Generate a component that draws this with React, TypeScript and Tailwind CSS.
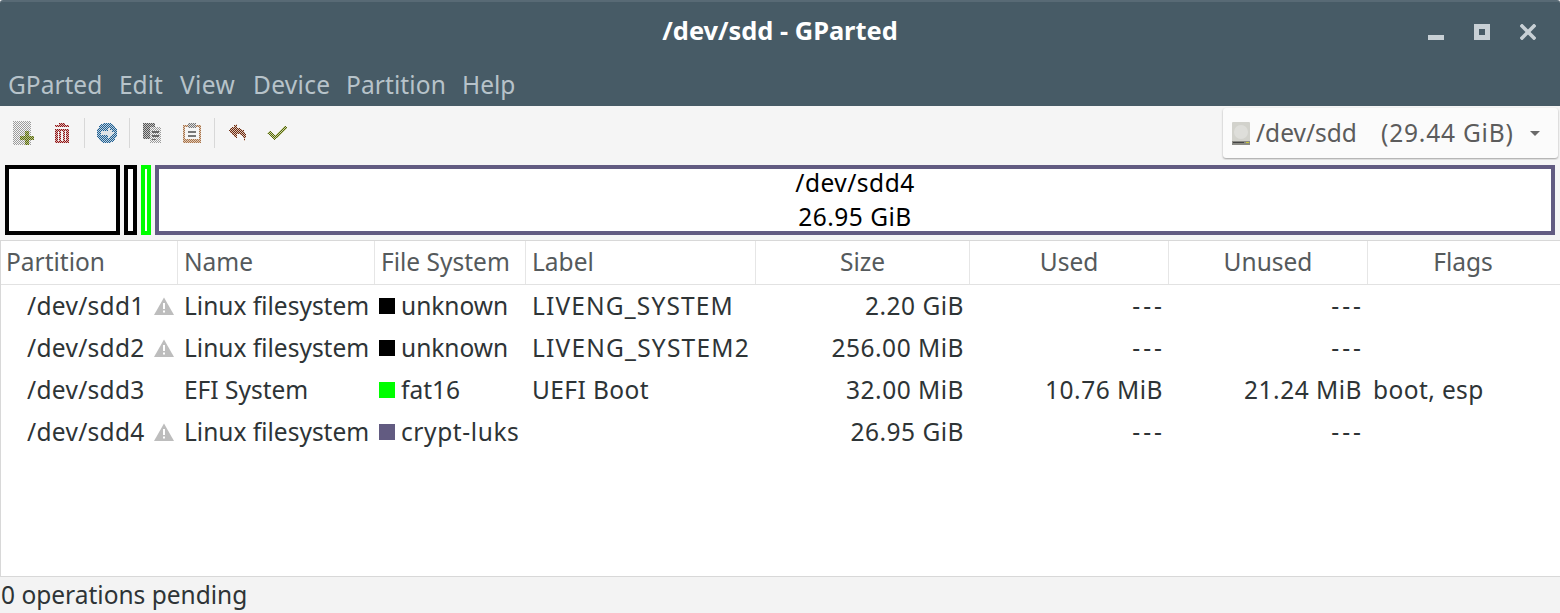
import { ReactNode } from "react";

// flip swaps the dark and pale cells, the phase differs from icon to icon in the reference.
function Checker({ id, color, pale = "#f5f5f5", flip = false }: { id: string; color: string; pale?: string; flip?: boolean }) {
  return (
    <pattern id={id} width="2" height="2" patternUnits="userSpaceOnUse">
      <rect width="2" height="2" fill={pale} />
      <rect x={flip ? 1 : 0} width="1" height="1" fill={color} />
      <rect x={flip ? 0 : 1} y="1" width="1" height="1" fill={color} />
    </pattern>
  );
}

function Icon({ w, h, className, children }: { w: number; h: number; className?: string; children: ReactNode }) {
  return (
    <svg width={w} height={h} viewBox={`0 0 ${w} ${h}`} shapeRendering="crispEdges" className={`shrink-0 ${className ?? ""}`}>
      {children}
    </svg>
  );
}

function ToolbarSep({ className }: { className: string }) {
  return <div className={`h-[30px] w-px shrink-0 bg-[#d8d8d8] ${className}`} />;
}

function DriveCombo() {
  return (
    <div className="ml-auto mr-[2px] flex h-[50px] w-[335px] items-center rounded-[3px] bg-[#fbfbfb] pl-[9px] text-[#5c5c5c] shadow-[0_1px_2px_rgba(0,0,0,0.35)]">
      <svg width="18" height="23" viewBox="0 0 18 23" className="shrink-0">
        <rect width="18" height="23" rx="1" fill="#d2d2cc" />
        <circle cx="9" cy="10" r="7" fill="#dededa" />
        <rect y="19" width="18" height="4" fill="#8a8a84" />
        <rect x="1" y="20" width="11" height="1" fill="#444" />
        <rect x="14" y="20" width="3" height="1" fill="#c8c832" />
      </svg>
      <span className="ml-[6px] w-[125px]">/dev/sdd</span>
      <span className="tracking-[0.8px]">(29.44 GiB)</span>
      <svg width="10" height="5" viewBox="0 0 10 5" className="ml-[16px] mt-[1px]">
        <path d="M0 0h10L5 5z" fill="#6a6a6a" />
      </svg>
    </div>
  );
}

function Toolbar() {
  return (
    <div className="flex h-[54px] items-center bg-[#f5f5f5] pl-[13px]">
      <Icon w={21} h={24}>
        <defs>
          <Checker id="p-doc" color="#9c9c9c" />
          <Checker id="p-green" color="#5a6b10" pale="#b9c08a" />
        </defs>
        <rect width="18" height="24" fill="url(#p-doc)" />
        <path d="M12 10h4v5h5v4h-5v5h-4v-5H7v-4h5z" fill="url(#p-green)" />
      </Icon>
      <Icon w={14} h={20} className="ml-[21px]">
        <defs>
          <Checker id="p-red" color="#8f1515" pale="#dcb4b4" />
        </defs>
        <path d="M4 0h6v2h4v2H0V2h4z" fill="url(#p-red)" />
        <path d="M0 6h14v14H0zM3 8v10h1V8zM6 8v10h2V8zM10 8v10h1V8z" fillRule="evenodd" fill="url(#p-red)" />
      </Icon>
      <ToolbarSep className="ml-[15px]" />
      <Icon w={20} h={20} className="ml-[12px]">
        <defs>
          <Checker id="p-blue" color="#1d5f94" pale="#c2d2de" flip />
        </defs>
        <path d="M6 0h8v1h2v1h1v1h1v2h1v1h1v8h-1v1h-1v2h-1v1h-1v1h-2v1H6v-1H4v-1H3v-1H2v-2H1v-1H0V6h1V5h1V3h1V2h1V1h2z" fill="url(#p-blue)" />
        <path d="M4 8h7V5h2v2h2v2h2v2h-2v2h-2v2h-2v-3H4z" fill="#dfe3e6" />
      </Icon>
      <ToolbarSep className="ml-[12px]" />
      <Icon w={18} h={20} className="ml-[13px]">
        <defs>
          <Checker id="p-gray" color="#555555" pale="#c4c4c4" />
          <Checker id="p-lgray" color="#9c9c9c" />
        </defs>
        <rect width="12" height="16" fill="url(#p-gray)" />
        <rect x="7" y="4" width="11" height="16" fill="url(#p-lgray)" />
        <path d="M9 8h7v2H9zM9 12h7v2H9zM9 16h4v1H9z" fill="#666666" />
      </Icon>
      <Icon w={18} h={20} className="ml-[22px]">
        <defs>
          <Checker id="p-brown" color="#a8734a" pale="#e0cbb8" />
          <Checker id="p-clip" color="#777777" pale="#dddddd" />
        </defs>
        <path d="M0 2h18v18H0zM2 4v12h14V4z" fillRule="evenodd" fill="url(#p-brown)" />
        <rect x="5" width="8" height="5" fill="url(#p-clip)" />
        <path d="M5 8h8v2H5zM5 12h8v2H5z" fill="#777777" />
      </Icon>
      <ToolbarSep className="ml-[13px]" />
      <Icon w={17} h={18} className="ml-[14px]">
        <defs>
          <Checker id="p-undo" color="#6b2a10" pale="#dcc4b6" />
        </defs>
        <path d="M7 0h1v4h3v1h2v1h2v2h1v2h1v4h-1v3h-1v-3h-1v-2h-1v-1h-2v-1H8v4H7v-1H5v-2H3V9H1V7H0V6h1V4h2V3h2V1h2z" fill="url(#p-undo)" />
      </Icon>
      <Icon w={20} h={16} className="ml-[21px]">
        <defs>
          <Checker id="p-check" color="#55680a" pale="#ccd3a6" flip />
        </defs>
        <path d="M17 0h1v1h1v1h1v2h-1v1h-1v1h-1v1h-1v1h-1v1h-1v1h-1v1h-1v1h-1v1H9v1H8v1H7v-1H6v-1H5v-1H4v-1H3v-1H2v-1H1V9H0V8h1V7h1V6h2v1h1v1h1v1h1v1h2V9h1V8h1V7h1V6h1V5h1V4h1V3h1V2h1V1h1z" fill="url(#p-check)" />
      </Icon>
      <DriveCombo />
    </div>
  );
}

function PartitionBar() {
  return (
    <div className="flex h-[80px] gap-[4px] bg-[#f5f5f5] pl-[5px] pr-[5px] pt-[5px]">
      <div className="h-[70px] w-[115px] border-4 border-black bg-white" />
      <div className="h-[70px] w-[13px] border-4 border-black bg-white" />
      <div className="h-[70px] w-[10px] border-4 border-[#00ff00] bg-white" />
      <div className="flex h-[70px] flex-1 flex-col items-center justify-center border-4 border-[#625b81] bg-white leading-[34px] tracking-[0.5px] text-black">
        <span>/dev/sdd4</span>
        <span>26.95 GiB</span>
      </div>
    </div>
  );
}

function Warning() {
  return (
    <svg width="20" height="18" viewBox="0 0 20 18" className="shrink-0">
      <path d="M10 0.5L20 18H0z" fill="#bdbdbd" />
      <rect x="9" y="6" width="2" height="6" fill="#fff" />
      <rect x="9" y="13.5" width="2" height="2" fill="#fff" />
    </svg>
  );
}

const columns = "grid grid-cols-[177px_197px_151px_230px_214px_199px_199px_1fr]";

const headers: { label: string; className: string }[] = [
  { label: "Partition", className: "pl-[5px]" },
  { label: "Name", className: "pl-[6px]" },
  { label: "File System", className: "pl-[6px]" },
  { label: "Label", className: "pl-[6px]" },
  { label: "Size", className: "justify-center" },
  { label: "Used", className: "justify-center" },
  { label: "Unused", className: "justify-center" },
  { label: "Flags", className: "justify-center pr-[2px]" },
];

const rows = [
  { dev: "/dev/sdd1", warn: true, name: "Linux filesystem", color: "bg-black", fs: "unknown", fsClass: "", label: "LIVENG_SYSTEM", labelClass: "tracking-[1.15px]", size: "2.20 GiB", used: "---", unused: "---", flags: "" },
  { dev: "/dev/sdd2", warn: true, name: "Linux filesystem", color: "bg-black", fs: "unknown", fsClass: "", label: "LIVENG_SYSTEM2", labelClass: "tracking-[1.2px]", size: "256.00 MiB", used: "---", unused: "---", flags: "" },
  { dev: "/dev/sdd3", warn: false, name: "EFI System", color: "bg-[#00ff00]", fs: "fat16", fsClass: "", label: "UEFI Boot", labelClass: "tracking-[0.4px]", size: "32.00 MiB", used: "10.76 MiB", unused: "21.24 MiB", flags: "boot, esp" },
  { dev: "/dev/sdd4", warn: true, name: "Linux filesystem", color: "bg-[#625b81]", fs: "crypt-luks", fsClass: "tracking-[0.6px]", label: "", labelClass: "", size: "26.95 GiB", used: "---", unused: "---", flags: "" },
];

function Amount({ value }: { value: string }) {
  // the dashes are wider in the reference font
  const spacing = value === "---" ? "pr-[4px] tracking-[3px]" : "pr-[6px] tracking-[0.5px]";
  return <div className={`text-right ${spacing}`}>{value}</div>;
}

function PartitionTable() {
  return (
    <div className="flex h-[337px] flex-col border border-r-0 border-[#d8d8d8] bg-white">
      <div className={`${columns} h-[44px] border-b border-[#e2e2e2] text-[#555a5c]`}>
        {headers.map((h, i) => (
          <div key={h.label} className={`flex items-center pb-[1px] ${i < headers.length - 1 ? "border-r border-[#e6e6e6]" : ""} ${h.className}`}>
            {h.label}
          </div>
        ))}
      </div>
      {rows.map((r) => (
        <div key={r.dev} className={`${columns} h-[42px] items-center whitespace-nowrap text-[#2e3436]`}>
          <div className="flex items-center pl-[26px]">
            <span className="w-[127px] tracking-[0.3px]">{r.dev}</span>
            {r.warn && <Warning />}
          </div>
          <div className="pl-[6px]">{r.name}</div>
          <div className="flex items-center pl-[4px]">
            <span className={`h-[16px] w-[16px] shrink-0 ${r.color}`} />
            <span className={`ml-[6px] ${r.fsClass}`}>{r.fs}</span>
          </div>
          <div className={`pl-[6px] ${r.labelClass}`}>{r.label}</div>
          <Amount value={r.size} />
          <Amount value={r.used} />
          <Amount value={r.unused} />
          <div className="pl-[5px] tracking-[0.4px]">{r.flags}</div>
        </div>
      ))}
    </div>
  );
}

const menus = [
  { label: "GParted", className: "w-[111px]" },
  { label: "Edit", className: "w-[61px]" },
  { label: "View", className: "w-[73px] tracking-[0.4px]" },
  { label: "Device", className: "w-[93px] tracking-[0.3px]" },
  { label: "Partition", className: "w-[116px] tracking-[0.1px]" },
  { label: "Help", className: "w-[60px]" },
];

export default function App() {
  return (
    <div className="flex h-[613px] w-[1560px] flex-col overflow-hidden bg-[#f3f3f3] font-['Noto_Sans',sans-serif] text-[24.5px]">
      <div className="rounded-t-[3px] border-t-2 border-[#586a75] bg-[#475b66]">
        <div className="relative flex h-[66px] items-center justify-center pb-[10px]">
          <span className="text-[25.4px] font-bold text-white">/dev/sdd - GParted</span>
          <div className="absolute right-[24px] top-[22px] flex items-start gap-[30px]">
            <div className="mt-[11px] h-[5px] w-[16px] bg-[#c8d0d5]" />
            <div className="h-[16px] w-[16px] border-[5px] border-[#c8d0d5]" />
            <svg width="16" height="16" viewBox="0 0 16 16">
              <path d="M2 2l12 12M14 2L2 14" stroke="#c8d0d5" strokeWidth="3.6" strokeLinecap="square" />
            </svg>
          </div>
        </div>
        <div className="flex h-[38px] items-center pb-[4px] pl-[8px] text-[#b7c3ca]">
          {menus.map((m) => (
            <span key={m.label} className={m.className}>{m.label}</span>
          ))}
        </div>
      </div>
      <Toolbar />
      <PartitionBar />
      <PartitionTable />
      <div className="flex h-[36px] items-center pl-[1px] text-[#2e3436]">0 operations pending</div>
    </div>
  );
}
